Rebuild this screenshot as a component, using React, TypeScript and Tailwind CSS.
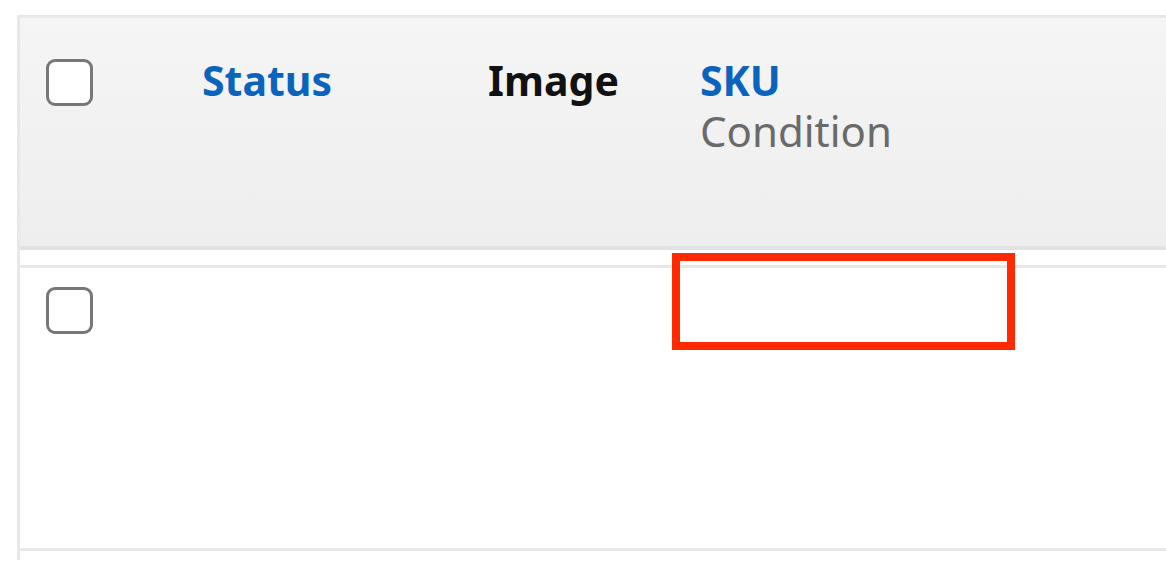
const font = { fontFamily: '"Noto Sans", "Open Sans", Arial, sans-serif' }

function Checkbox() {
  return <span className="block size-[47px] rounded-[9px] border-[3px] border-[#777777] bg-white" />
}

export default function App() {
  return (
    <div className="relative h-[572px] w-[1166px] overflow-hidden bg-white" style={font}>
      <div className="pl-[17px] pt-[15px]">
        <div className="h-[545px] border-l-[3px] border-t-[3px] border-[#e8e8e8]">
          {/* header */}
          <div className="flex h-[232px] bg-linear-to-b from-[#f5f5f5] to-[#eeeeee] border-b-[4px] border-[#e2e2e2] pt-[41px]">
            <div className="w-[182px] pl-[26px]">
              <Checkbox />
            </div>
            <div className="w-[286px] pt-[1px] text-[41px] font-bold leading-none text-[#0a63bd]">Status</div>
            <div className="w-[212px] pt-[1px] text-[41px] font-bold leading-none text-[#111111]">Image</div>
            <div className="flex flex-col pt-[1px] leading-none">
              <span className="text-[41px] font-bold text-[#0a63bd]">SKU</span>
              <span className="mt-[9px] text-[42px] text-[#6a6a6a]">Condition</span>
            </div>
          </div>

          {/* row */}
          <div className="mt-[15px] h-[286px] border-y-[3px] border-[#e8e8e8] bg-white pt-[19px]">
            <div className="w-[182px] pl-[26px]">
              <Checkbox />
            </div>
          </div>
        </div>
      </div>

      {/* annotation */}
      <div className="absolute left-[672px] top-[253px] h-[97px] w-[343px] border-[8px] border-[#ff2a00]" />
    </div>
  )
}
